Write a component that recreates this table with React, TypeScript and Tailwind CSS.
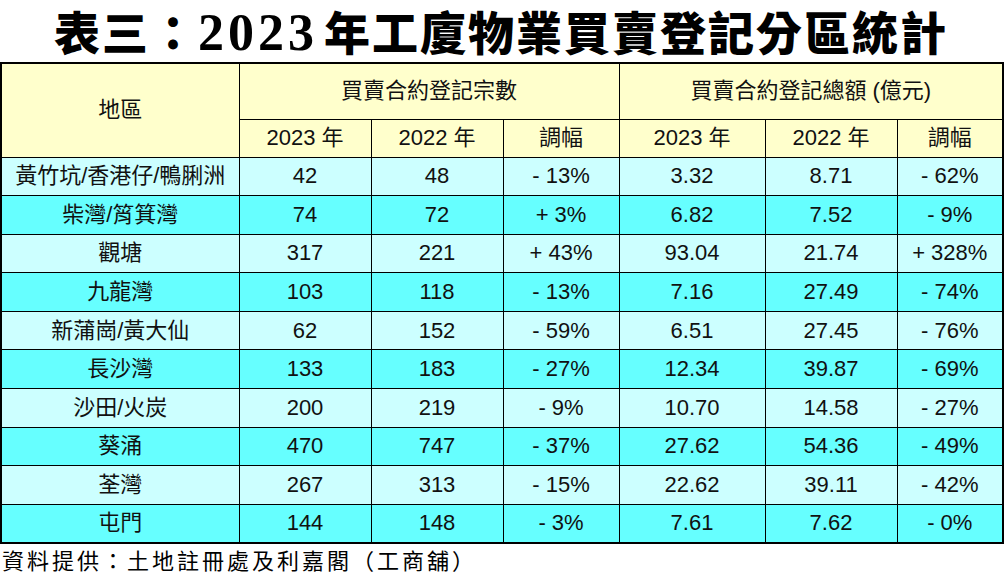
import React from "react";

const rows: string[][] = [
  ["黃竹坑/香港仔/鴨脷洲", "42", "48", "- 13%", "3.32", "8.71", "- 62%"],
  ["柴灣/筲箕灣", "74", "72", "+ 3%", "6.82", "7.52", "- 9%"],
  ["觀塘", "317", "221", "+ 43%", "93.04", "21.74", "+ 328%"],
  ["九龍灣", "103", "118", "- 13%", "7.16", "27.49", "- 74%"],
  ["新蒲崗/黃大仙", "62", "152", "- 59%", "6.51", "27.45", "- 76%"],
  ["長沙灣", "133", "183", "- 27%", "12.34", "39.87", "- 69%"],
  ["沙田/火炭", "200", "219", "- 9%", "10.70", "14.58", "- 27%"],
  ["葵涌", "470", "747", "- 37%", "27.62", "54.36", "- 49%"],
  ["荃灣", "267", "313", "- 15%", "22.62", "39.11", "- 42%"],
  ["屯門", "144", "148", "- 3%", "7.61", "7.62", "- 0%"],
];

const font = "font-['Liberation_Sans','Noto_Sans_CJK_TC',sans-serif]";

export default function App() {
  return (
    <div className={`w-[1006px] min-h-[574px] bg-white ${font} text-[#111]`}>
      <div className="h-[62px] flex items-center justify-center pr-[4px]">
        <h1 className="text-[46px] leading-[52px] tracking-[2px] font-black text-black font-['Noto_Sans_CJK_TC',sans-serif] whitespace-nowrap">
          表三：<span className="font-['Liberation_Serif',serif] font-bold text-[52px] tracking-[4px] mr-[6px]">2023</span>年工廈物業買賣登記分區統計
        </h1>
      </div>
      <table className="table-fixed border-collapse border-2 border-black w-[1002px] text-[22px] leading-none">
        <colgroup>
          <col className="w-[238px]" />
          <col className="w-[132px]" />
          <col className="w-[132px]" />
          <col className="w-[116px]" />
          <col className="w-[146px]" />
          <col className="w-[132px]" />
          <col className="w-[106px]" />
        </colgroup>
        <thead>
          <tr className="h-[56px] bg-[#ffffcc]">
            <th rowSpan={2} className="border border-black font-normal text-center">地區</th>
            <th colSpan={3} className="border border-black font-normal text-center">買賣合約登記宗數</th>
            <th colSpan={3} className="border border-black font-normal text-center">買賣合約登記總額 (億元)</th>
          </tr>
          <tr className="h-[38px] bg-[#ffffcc]">
            <th className="border border-black font-normal">2023 年</th>
            <th className="border border-black font-normal">2022 年</th>
            <th className="border border-black font-normal">調幅</th>
            <th className="border border-black font-normal">2023 年</th>
            <th className="border border-black font-normal">2022 年</th>
            <th className="border border-black font-normal">調幅</th>
          </tr>
        </thead>
        <tbody>
          {rows.map((r, i) => (
            <tr
              key={i}
              className={i % 2 === 0 ? "h-[38.6px] bg-[#ccffff]" : "h-[38.6px] bg-[#66ffff]"}
            >
              {r.map((c, j) => (
                <td key={j} className="border border-black text-center whitespace-nowrap">
                  {c}
                </td>
              ))}
            </tr>
          ))}
        </tbody>
      </table>
      <div className="pl-[2px] text-[22px] leading-[30px] tracking-[3px] text-black font-['Noto_Sans_CJK_TC',sans-serif] whitespace-nowrap">
        資料提供：土地註冊處及利嘉閣（工商舖）
      </div>
    </div>
  );
}
